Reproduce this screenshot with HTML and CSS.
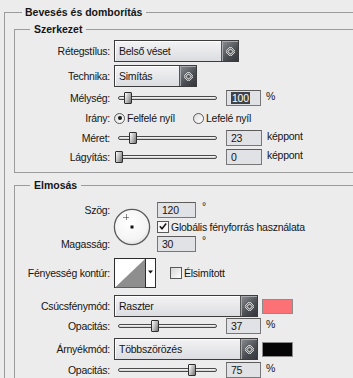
FILE: index.html
```html
<!DOCTYPE html>
<html>
<head>
  <title>Bevesés és domborítás</title>
  <link rel="stylesheet" href="styles.css">
</head>
<body>
  <fieldset class="group outer">
    <legend>Bevesés és domborítás</legend>

    <fieldset class="group section structure">
      <legend>Szerkezet</legend>
      <div class="rows">
        <div class="row h22">
          <span class="lbl">Rétegstílus:</span>
          <div class="select w-style">
            <span class="select-text">Belső véset</span>
            <span class="select-btn"><svg width="9" height="9" viewBox="0 0 9 9"><polygon points="4.5,0.8 8.2,4.5 4.5,8.2 0.8,4.5" fill="none" stroke="#fff" stroke-width="2.2"/><polygon points="4.5,0.8 8.2,4.5 4.5,8.2 0.8,4.5" fill="none" stroke="#111" stroke-width="0.9"/></svg></span>
          </div>
        </div>

        <div class="row h22">
          <span class="lbl">Technika:</span>
          <div class="select w-tech">
            <span class="select-text">Simítás</span>
            <span class="select-btn"><svg width="9" height="9" viewBox="0 0 9 9"><polygon points="4.5,0.8 8.2,4.5 4.5,8.2 0.8,4.5" fill="none" stroke="#fff" stroke-width="2.2"/><polygon points="4.5,0.8 8.2,4.5 4.5,8.2 0.8,4.5" fill="none" stroke="#111" stroke-width="0.9"/></svg></span>
          </div>
        </div>

        <div class="row h16">
          <span class="lbl">Mélység:</span>
          <div class="slider"><div class="track"></div><div class="thumb" style="left: 10px"></div></div>
          <div class="num"><span class="sel">100</span></div>
          <span class="unit">%</span>
        </div>

        <div class="row h18">
          <span class="lbl">Irány:</span>
          <label class="radio-opt first"><span class="radio on"></span>Felfelé nyíl</label>
          <label class="radio-opt"><span class="radio"></span>Lefelé nyíl</label>
        </div>

        <div class="row h16">
          <span class="lbl">Méret:</span>
          <div class="slider"><div class="track"></div><div class="thumb" style="left: 15px"></div></div>
          <div class="num wide">23</div>
          <span class="unit">képpont</span>
        </div>

        <div class="row h16">
          <span class="lbl">Lágyítás:</span>
          <div class="slider"><div class="track"></div><div class="thumb" style="left: 1px"></div></div>
          <div class="num wide">0</div>
          <span class="unit">képpont</span>
        </div>
      </div>
    </fieldset>

    <fieldset class="group section blur">
      <legend>Elmosás</legend>

      <div class="angle-block">
        <span class="lbl a-top">Szög:</span>
        <span class="lbl a-bottom">Magasság:</span>
        <div class="dial">
          <svg width="38" height="38" viewBox="0 0 38 38">
            <defs>
              <radialGradient id="dialFill" cx="0.45" cy="0.4" r="0.65">
                <stop offset="0" stop-color="#ffffff"/>
                <stop offset="0.75" stop-color="#f4f4f4"/>
                <stop offset="1" stop-color="#d8d8d8"/>
              </radialGradient>
            </defs>
            <circle cx="19" cy="19" r="17.6" fill="url(#dialFill)" stroke="#5b5b5b" stroke-width="1.3"/>
            <path d="M13.5 6.5v6M10.5 9.5h6" stroke="#222" stroke-width="1" stroke-dasharray="1 1"/>
            <rect x="17.5" y="17.5" width="3" height="3" fill="#111"/>
          </svg>
        </div>
        <div class="a-row a-top">
          <div class="num angle">120</div>
          <span class="deg">°</span>
        </div>
        <label class="a-row a-mid">
          <span class="check on"><svg width="11" height="11" viewBox="0 0 11 11"><path d="M2 5.3 4.4 8 9 2.2" fill="none" stroke="#111" stroke-width="1.6"/></svg></span>
          Globális fényforrás használata
        </label>
        <div class="a-row a-bottom">
          <div class="num angle">30</div>
          <span class="deg">°</span>
        </div>
      </div>

      <div class="row contour-row">
        <span class="lbl">Fényesség kontúr:</span>
        <div class="contour">
          <svg width="42" height="30" viewBox="0 0 42 30">
            <rect x="0.5" y="0.5" width="41" height="29" fill="#fff" stroke="#2c2c2c"/>
            <polygon points="1,29.5 31,1 31,29.5" fill="#8e8e8e"/>
            <line x1="31.5" y1="0" x2="31.5" y2="30" stroke="#2c2c2c"/>
            <polygon points="34,12.5 39,12.5 36.5,15.5" fill="#111"/>
          </svg>
        </div>
        <label class="check-opt"><span class="check"></span>Élsimított</label>
      </div>

      <div class="row h22 mode-first">
        <span class="lbl">Csúcsfénymód:</span>
        <div class="select w-mode">
          <span class="select-text">Raszter</span>
          <span class="select-btn"><svg width="9" height="9" viewBox="0 0 9 9"><polygon points="4.5,0.8 8.2,4.5 4.5,8.2 0.8,4.5" fill="none" stroke="#fff" stroke-width="2.2"/><polygon points="4.5,0.8 8.2,4.5 4.5,8.2 0.8,4.5" fill="none" stroke="#111" stroke-width="0.9"/></svg></span>
        </div>
        <span class="swatch pink"></span>
      </div>

      <div class="row h16 opac-first">
        <span class="lbl">Opacitás:</span>
        <div class="slider"><div class="track"></div><div class="thumb" style="left: 37px"></div></div>
        <div class="num">37</div>
        <span class="unit">%</span>
      </div>

      <div class="row h22 mode-second">
        <span class="lbl">Árnyékmód:</span>
        <div class="select w-mode">
          <span class="select-text">Többszörözés</span>
          <span class="select-btn"><svg width="9" height="9" viewBox="0 0 9 9"><polygon points="4.5,0.8 8.2,4.5 4.5,8.2 0.8,4.5" fill="none" stroke="#fff" stroke-width="2.2"/><polygon points="4.5,0.8 8.2,4.5 4.5,8.2 0.8,4.5" fill="none" stroke="#111" stroke-width="0.9"/></svg></span>
        </div>
        <span class="swatch black"></span>
      </div>

      <div class="row h16 opac-second">
        <span class="lbl">Opacitás:</span>
        <div class="slider"><div class="track"></div><div class="thumb" style="left: 74px"></div></div>
        <div class="num">75</div>
        <span class="unit">%</span>
      </div>
    </fieldset>
  </fieldset>
</body>
</html>
```

FILE: styles.css
```css
html, body {
  height: 378px;
  overflow: hidden;
}

body {
  margin: 0;
  width: 353px;
  background-color: #ececec;
  font-family: "Liberation Sans", Arial, sans-serif;
  font-size: 10.5px;
  letter-spacing: -0.25px;
  color: #151515;
}

/* group boxes */
.group {
  border: 1px solid #9b9b9b;
  border-right: 0;
  min-inline-size: 0;
}

.group legend {
  font-weight: bold;
  font-size: 10.5px;
  line-height: 14px;
  padding: 0 4px 0 3px;
  letter-spacing: 0;
}

.outer {
  margin: 5px 0 0 4px;
  padding: 0 0 0 9px;
  border-bottom: 0;
}

.outer > legend {
  margin-left: 8px;
}

.section {
  margin: 3px 0 0 0;
  padding: 4px 0 7px 0;
}

.section > legend {
  margin-left: 15px;
  padding: 0 4px;
}

.blur {
  margin-top: 5px;
  padding-top: 10px;
  border-bottom: 0;
}

/* rows */
.rows {
  display: flex;
  flex-direction: column;
  gap: 3px;
}

.row {
  display: flex;
  align-items: center;
}

.h22 { height: 22px; }
.h18 { height: 18px; }
.h16 { height: 16px; }

.lbl {
  flex: 0 0 95px;
  margin-right: 4px;
  text-align: right;
  white-space: nowrap;
}

/* dropdowns */
.select {
  display: flex;
  height: 22px;
  box-sizing: border-box;
  border: 1px solid #3c3c3c;
  background: linear-gradient(#f3f3f5, #dcdde1);
  box-shadow: inset 1px 1px 0 #ffffff;
}

.w-style { width: 125px; }
.w-tech { width: 83px; }
.w-mode { width: 144px; }

.select-text {
  flex: 1;
  padding-left: 4px;
  line-height: 20px;
  white-space: nowrap;
}

.select-btn {
  width: 16px;
  display: flex;
  align-items: center;
  justify-content: center;
  border-left: 1px solid #555;
  background: linear-gradient(135deg, #8b8e93, #4a4d52 60%, #34363a);
  box-shadow: inset 1px 1px 0 #a6a9ad;
}

/* sliders */
.slider {
  position: relative;
  width: 103px;
  height: 16px;
  margin-right: 9px;
  display: flex;
  align-items: center;
}

.track {
  flex: 1;
  margin-left: 4px;
  height: 4px;
  box-sizing: border-box;
  border: 1px solid #4a4a4a;
  border-radius: 3px;
  background: linear-gradient(#fdfdfd, #c9c9c9);
}

.thumb {
  position: absolute;
  top: 2px;
  width: 8px;
  height: 12px;
  box-sizing: border-box;
  border: 1px solid #2e2e2e;
  border-radius: 1px;
  background: linear-gradient(110deg, #ffffff, #b5b5b5 55%, #6e6e6e);
}

/* number fields */
.num {
  width: 35px;
  height: 16px;
  box-sizing: border-box;
  border: 1px solid #777;
  border-top-color: #5c5c5c;
  background-color: #e1e2e6;
  padding-left: 4px;
  line-height: 14px;
}

.num.wide { width: 36px; }
.num.angle { width: 39px; }

.sel {
  display: inline-block;
  background-color: #3e434b;
  color: #fff;
  padding: 0 1px;
  line-height: 12px;
}

.unit {
  margin-left: 5px;
  align-self: flex-start;
  line-height: 12px;
}

.deg {
  margin-left: 6px;
  align-self: flex-start;
  line-height: 9px;
}

/* radios and checks */
.radio-opt {
  display: flex;
  align-items: center;
  gap: 2px;
}

.radio-opt.first { width: 79px; }

.radio {
  width: 11px;
  height: 11px;
  box-sizing: border-box;
  border: 1px solid #5a5a5a;
  border-radius: 50%;
  background: linear-gradient(135deg, #dcdcdc, #ffffff);
  display: flex;
  align-items: center;
  justify-content: center;
}

.radio.on::after {
  content: "";
  width: 4px;
  height: 4px;
  border-radius: 50%;
  background-color: #161616;
}

.check {
  width: 12px;
  height: 12px;
  box-sizing: border-box;
  border: 1px solid #5a5a5a;
  background: linear-gradient(135deg, #d6d6d6, #ffffff);
  display: inline-flex;
  margin-right: 2px;
}

.check.on {
  background: #f7f7f7;
}

.check svg {
  margin: -1px 0 0 0;
}

/* angle block */
.angle-block {
  display: grid;
  grid-template-columns: 98px 38px auto;
  grid-template-rows: 16px 14px 16px;
  row-gap: 2px;
  align-items: center;
}

.angle-block .lbl {
  grid-column: 1;
  margin-right: 0;
  padding-right: 3px;
}

.a-top { grid-row: 1; }
.a-mid { grid-row: 2; }
.a-bottom { grid-row: 3; }

.dial {
  grid-column: 2;
  grid-row: 1 / 4;
  display: flex;
  align-self: center;
}

.a-row {
  grid-column: 3;
  margin-left: 6px;
  display: flex;
  align-items: center;
  height: 100%;
  white-space: nowrap;
}

/* contour */
.contour-row {
  margin-top: 6px;
  height: 30px;
}

.contour {
  display: flex;
  margin-right: 14px;
}

.check-opt {
  display: flex;
  align-items: center;
}

/* modes */
.mode-first { margin-top: 7px; }
.opac-first { margin-top: 1px; }
.mode-second { margin-top: 4px; }
.opac-second { margin-top: 2px; }

.swatch {
  width: 31px;
  height: 15px;
  box-sizing: border-box;
  margin-left: 4px;
  border: 1px solid #8c8c8c;
}

.swatch.pink { background-color: #fb7175; }
.swatch.black { background-color: #050505; }
```
